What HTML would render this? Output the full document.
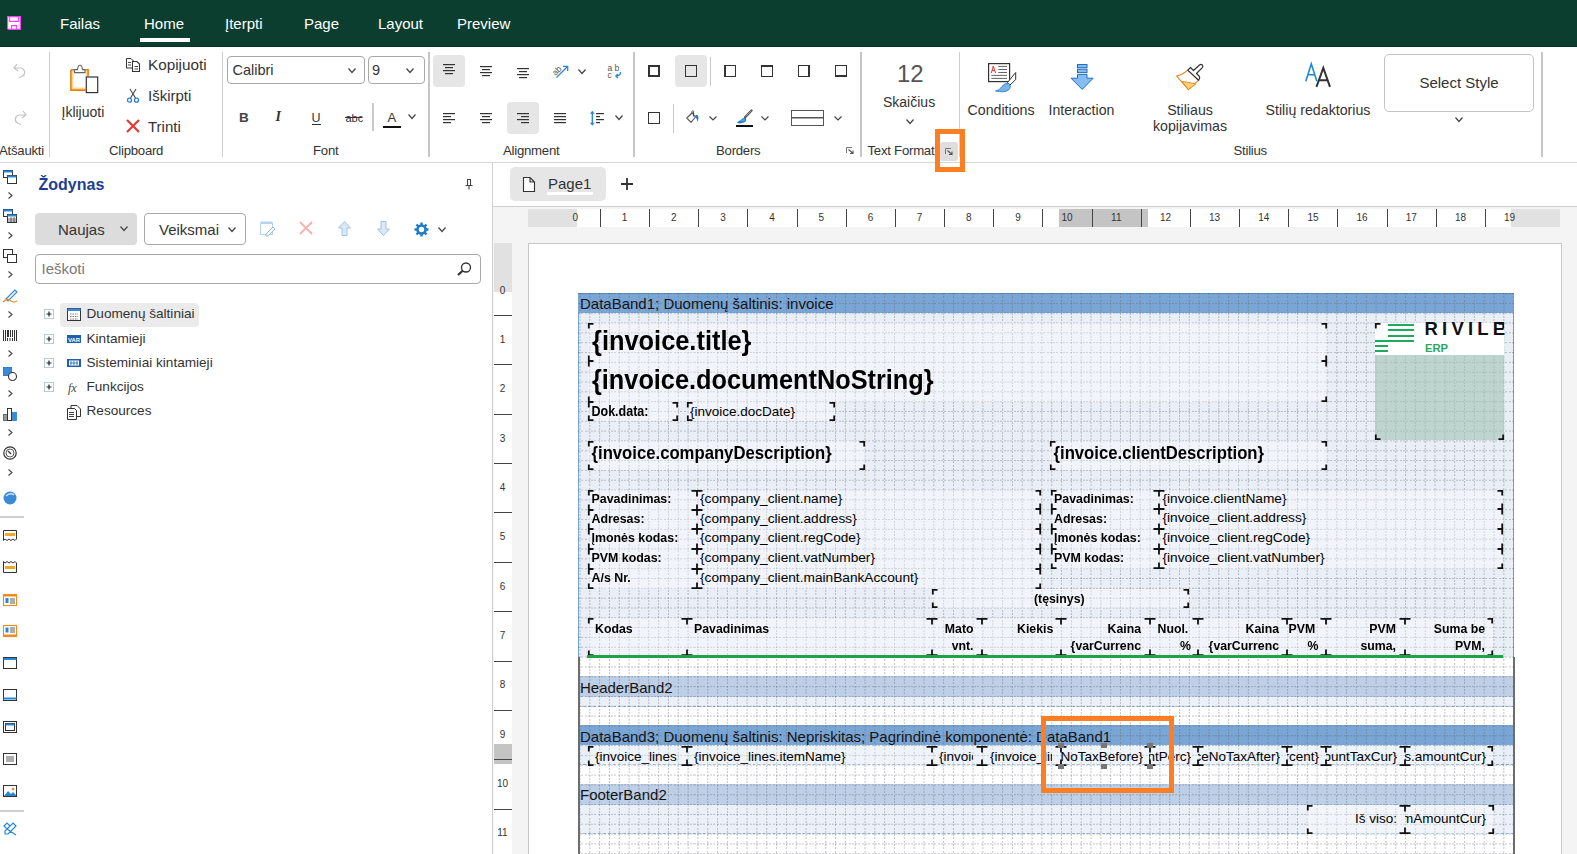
<!DOCTYPE html>
<html><head><meta charset="utf-8"><title>Designer</title>
<style>
html,body{margin:0;padding:0;}
body{width:1577px;height:854px;overflow:hidden;position:relative;background:#fff;font-family:"Liberation Sans",sans-serif;color:#333;}
.a{position:absolute;}
.t{position:absolute;white-space:nowrap;line-height:1;}
svg{overflow:visible}
</style></head><body>

<div class="a" style="left:0px;top:0px;width:1577px;height:47px;background:#0c3e2f;border-bottom:1px solid #06301f;box-sizing:border-box"></div>
<svg class="a" style="left:7px;top:16px" width="14" height="14" viewBox="0 0 14 14"><path d="M0.6 0.6 H13.4 V13.4 H1.6 L0.6 12.4 Z" fill="#fff" stroke="#ff3dff" stroke-width="1.2"/><path d="M2.6 0.6 V5.4 H11.4 V0.6" fill="none" stroke="#ff3dff" stroke-width="1.1"/><path d="M4.6 13.4 V9.6 H9.4 V13.4" fill="none" stroke="#ff3dff" stroke-width="1.1"/></svg>
<div class="t" style="left:60.00px;top:16.49px;font-size:15px;color:#fff;">Failas</div>
<div class="t" style="left:144.00px;top:16.49px;font-size:15px;color:#fff;">Home</div>
<div class="t" style="left:225.00px;top:16.49px;font-size:15px;color:#fff;">Įterpti</div>
<div class="t" style="left:304.00px;top:16.49px;font-size:15px;color:#fff;">Page</div>
<div class="t" style="left:378.00px;top:16.49px;font-size:15px;color:#fff;">Layout</div>
<div class="t" style="left:457.00px;top:16.49px;font-size:15px;color:#fff;">Preview</div>
<div class="a" style="left:140px;top:38px;width:50px;height:4px;background:#fff"></div>
<div class="a" style="left:0px;top:162px;width:1577px;height:1px;background:#d4d4d4"></div>
<div class="a" style="left:49px;top:52px;width:1px;height:105px;background:#cfcfcf"></div>
<div class="a" style="left:222px;top:52px;width:1px;height:105px;background:#cfcfcf"></div>
<div class="a" style="left:428px;top:52px;width:2px;height:105px;background:#c6c6c6"></div>
<div class="a" style="left:633px;top:52px;width:2px;height:105px;background:#c6c6c6"></div>
<div class="a" style="left:860px;top:52px;width:2px;height:105px;background:#c6c6c6"></div>
<div class="a" style="left:959px;top:52px;width:1px;height:105px;background:#cfcfcf"></div>
<div class="a" style="left:1541px;top:52px;width:2px;height:105px;background:#c6c6c6"></div>
<div class="t" style="left:-1.00px;top:144.02px;font-size:13.2px;letter-spacing:-0.25px;">Atšaukti</div>
<div class="t" style="left:109.00px;top:144.02px;font-size:13.2px;letter-spacing:-0.25px;">Clipboard</div>
<div class="t" style="left:313.00px;top:144.02px;font-size:13.2px;letter-spacing:-0.25px;">Font</div>
<div class="t" style="left:503.00px;top:144.02px;font-size:13.2px;letter-spacing:-0.25px;">Alignment</div>
<div class="t" style="left:716.00px;top:144.02px;font-size:13.2px;letter-spacing:-0.25px;">Borders</div>
<div class="t" style="left:867.50px;top:144.02px;font-size:13.2px;letter-spacing:-0.25px;">Text Format</div>
<div class="t" style="left:1233.50px;top:144.02px;font-size:13.2px;letter-spacing:-0.25px;">Stilius</div>
<svg class="a" style="left:13px;top:62px" width="14" height="16" viewBox="0 0 14 16"><path d="M4 2 L1 6 L5 9 M1.5 6 H8 A4.5 4.5 0 0 1 9 14.5 L6 15.5" fill="none" stroke="#c4c4c4" stroke-width="1.2"/></svg>
<svg class="a" style="left:13px;top:109px" width="14" height="16" viewBox="0 0 14 16"><path d="M10 2 L13 6 L9 9 M12.5 6 H6 A4.5 4.5 0 0 0 5 14.5 L8 15.5" fill="none" stroke="#c4c4c4" stroke-width="1.2"/></svg>
<svg class="a" style="left:70px;top:64px" width="29" height="30" viewBox="0 0 29 30"><path d="M1 5.8 H18 V12.5 M1 5.8 V26 H15.5" fill="none" stroke="#e8801a" stroke-width="1.8"/><path d="M2.6 7.4 H16.4 V12.5 M2.6 7.4 V24.4 H15.5" fill="none" stroke="#ffd98a" stroke-width="1.6"/><path d="M4.5 8.6 V5.6 H7.5 Q8 1.2 10 1.2 Q12 1.2 12.5 5.6 H15 V8.6 Z" fill="#fff" stroke="#666" stroke-width="1.1"/><rect x="16.3" y="13" width="11.4" height="15.6" fill="#fff" stroke="#333" stroke-width="1.2"/></svg>
<div class="t" style="left:61.50px;top:105.34px;font-size:14px;">Įklijuoti</div>
<svg class="a" style="left:126px;top:58px" width="14" height="14" viewBox="0 0 14 14"><path d="M0.5 0.5 H5 L7.5 3 V10 H0.5 Z" fill="#fff" stroke="#333" stroke-width="1"/><path d="M6.5 3.5 H11 L13.5 6 V13.5 H6.5 Z" fill="#fff" stroke="#333" stroke-width="1.1"/><rect x="8.5" y="8" width="3.5" height="1" fill="#444"/><rect x="8.5" y="10.5" width="3.5" height="1" fill="#444"/><rect x="2" y="4" width="3" height="1" fill="#444"/><rect x="2" y="6.5" width="3" height="1" fill="#444"/></svg>
<div class="t" style="left:148.00px;top:56.54px;font-size:15.3px;">Kopijuoti</div>
<svg class="a" style="left:126px;top:89px" width="14" height="14" viewBox="0 0 14 14"><path d="M4 0 L9.5 9 M10 0 L4.5 9" stroke="#444" stroke-width="1.1" fill="none"/><circle cx="3.5" cy="11.2" r="2" fill="none" stroke="#2a7fd0" stroke-width="1.3"/><circle cx="10.5" cy="11.2" r="2" fill="none" stroke="#2a7fd0" stroke-width="1.3"/></svg>
<div class="t" style="left:148.00px;top:88.30px;font-size:15px;">Iškirpti</div>
<svg class="a" style="left:126px;top:119px" width="14" height="14" viewBox="0 0 14 14"><path d="M1 1 L13 13 M13 1 L1 13" stroke="#e53935" stroke-width="2.2"/></svg>
<div class="t" style="left:148.00px;top:119.10px;font-size:15px;">Trinti</div>
<div class="a" style="left:227px;top:56px;width:138px;height:28px;border:1px solid #a8a8a8;border-radius:4px;box-sizing:border-box;background:#fff"></div>
<div class="t" style="left:232.50px;top:63.32px;font-size:14.5px;">Calibri</div>
<div class="a" style="left:368px;top:56px;width:57px;height:28px;border:1px solid #a8a8a8;border-radius:4px;box-sizing:border-box;background:#fff"></div>
<div class="t" style="left:372.00px;top:63.32px;font-size:14.5px;">9</div>
<svg class="a" style="left:348px;top:67.5px" width="8" height="5" viewBox="0 0 8 5"><path d="M0.5 0.5 L4.0 4.5 L7.5 0.5" fill="none" stroke="#444" stroke-width="1.2"/></svg>
<svg class="a" style="left:406px;top:67.5px" width="8" height="5" viewBox="0 0 8 5"><path d="M0.5 0.5 L4.0 4.5 L7.5 0.5" fill="none" stroke="#444" stroke-width="1.2"/></svg>
<div class="t" style="left:239.00px;top:110.87px;font-size:13.5px;font-weight:bold;color:#444;">B</div>
<div class="t" style="left:275.50px;top:110.44px;font-size:14px;font-weight:bold;color:#333;font-style:italic;font-family:'Liberation Serif',serif;">I</div>
<div class="t" style="left:311.50px;top:111.71px;font-size:12.5px;color:#333;">U</div>
<div class="a" style="left:312px;top:124px;width:9px;height:1px;background:#333"></div>
<div class="t" style="left:345.50px;top:112.68px;font-size:11px;color:#333;">abc</div>
<div class="a" style="left:345px;top:117px;width:17px;height:1px;background:#333"></div>
<div class="a" style="left:372px;top:103px;width:2px;height:28px;background:#cacaca"></div>
<div class="t" style="left:387.50px;top:111.29px;font-size:13px;color:#333;">A</div>
<div class="a" style="left:383px;top:126px;width:18px;height:2px;background:#111"></div>
<svg class="a" style="left:408px;top:113.5px" width="8" height="5" viewBox="0 0 8 5"><path d="M0.5 0.5 L4.0 4.5 L7.5 0.5" fill="none" stroke="#444" stroke-width="1.2"/></svg>
<div class="a" style="left:433px;top:55px;width:32px;height:32px;background:#e6e6e6;border-radius:4px"></div>
<div class="a" style="left:507px;top:102px;width:32px;height:32px;background:#e6e6e6;border-radius:4px"></div>
<svg class="a" style="left:443px;top:64px" width="12" height="14" viewBox="0 0 12 14"><rect x="0.0" y="0" width="12" height="1.2" fill="#333"/><rect x="2.0" y="3" width="8" height="1.2" fill="#333"/><rect x="0.0" y="6" width="12" height="1.2" fill="#333"/><rect x="2.0" y="9" width="8" height="1.2" fill="#333"/></svg>
<svg class="a" style="left:480px;top:66px" width="12" height="14" viewBox="0 0 12 14"><rect x="0.0" y="0" width="12" height="1.2" fill="#333"/><rect x="2.0" y="3" width="8" height="1.2" fill="#333"/><rect x="0.0" y="6" width="12" height="1.2" fill="#333"/><rect x="2.0" y="9" width="8" height="1.2" fill="#333"/></svg>
<svg class="a" style="left:517px;top:68px" width="12" height="14" viewBox="0 0 12 14"><rect x="0.0" y="0" width="12" height="1.2" fill="#333"/><rect x="2.0" y="3" width="8" height="1.2" fill="#333"/><rect x="0.0" y="6" width="12" height="1.2" fill="#333"/><rect x="2.0" y="9" width="8" height="1.2" fill="#333"/></svg>
<svg class="a" style="left:552px;top:61px" width="17" height="18" viewBox="0 0 17 18"><text x="0" y="0" font-size="8.5" fill="#555" transform="translate(3.5 15) rotate(-45)" font-family="Liberation Sans">ab</text><path d="M4.5 16.5 L15.5 5.5 M11 5.3 H15.7 V10" fill="none" stroke="#2a88d8" stroke-width="1.3"/></svg>
<svg class="a" style="left:578px;top:69px" width="8" height="5" viewBox="0 0 8 5"><path d="M0.5 0.5 L4.0 4.5 L7.5 0.5" fill="none" stroke="#444" stroke-width="1.2"/></svg>
<svg class="a" style="left:607px;top:63px" width="16" height="16" viewBox="0 0 16 16"><text x="0.5" y="7.5" font-size="8.5" fill="#555" font-family="Liberation Sans">a</text><text x="7.5" y="7.5" font-size="8.5" fill="#555" font-family="Liberation Sans">b</text><text x="0.5" y="14.5" font-size="8.5" fill="#555" font-family="Liberation Sans">c</text><path d="M13.5 9 Q13.5 13 9 13 M11 11 L8.8 13 L11 15" fill="none" stroke="#2a88d8" stroke-width="1.3"/></svg>
<svg class="a" style="left:443px;top:113px" width="12" height="14" viewBox="0 0 12 14"><rect x="0" y="0" width="12" height="1.2" fill="#333"/><rect x="0" y="3" width="8" height="1.2" fill="#333"/><rect x="0" y="6" width="12" height="1.2" fill="#333"/><rect x="0" y="9" width="8" height="1.2" fill="#333"/></svg>
<svg class="a" style="left:480px;top:113px" width="12" height="14" viewBox="0 0 12 14"><rect x="0.0" y="0" width="12" height="1.2" fill="#333"/><rect x="2.0" y="3" width="8" height="1.2" fill="#333"/><rect x="0.0" y="6" width="12" height="1.2" fill="#333"/><rect x="2.0" y="9" width="8" height="1.2" fill="#333"/></svg>
<svg class="a" style="left:517px;top:113px" width="12" height="14" viewBox="0 0 12 14"><rect x="0" y="0" width="12" height="1.2" fill="#333"/><rect x="4" y="3" width="8" height="1.2" fill="#333"/><rect x="0" y="6" width="12" height="1.2" fill="#333"/><rect x="4" y="9" width="8" height="1.2" fill="#333"/></svg>
<svg class="a" style="left:554px;top:113px" width="12" height="14" viewBox="0 0 12 14"><rect x="0" y="0" width="12" height="1.2" fill="#333"/><rect x="0" y="3" width="12" height="1.2" fill="#333"/><rect x="0" y="6" width="12" height="1.2" fill="#333"/><rect x="0" y="9" width="12" height="1.2" fill="#333"/></svg>
<svg class="a" style="left:589px;top:110px" width="16" height="17" viewBox="0 0 16 17"><path d="M3.3 3 V13.5" stroke="#2a88d8" stroke-width="1.4"/><path d="M3.3 0.8 L0.9 3.8 H5.7 Z M3.3 15.8 L0.9 12.8 H5.7 Z" fill="#2a88d8"/><rect x="7" y="3" width="8" height="1.2" fill="#333"/><rect x="7" y="6" width="4" height="1.2" fill="#333"/><rect x="7" y="9" width="8" height="1.2" fill="#333"/><rect x="7" y="12" width="4" height="1.2" fill="#333"/></svg>
<svg class="a" style="left:615px;top:115px" width="8" height="5" viewBox="0 0 8 5"><path d="M0.5 0.5 L4.0 4.5 L7.5 0.5" fill="none" stroke="#444" stroke-width="1.2"/></svg>
<div class="a" style="left:675px;top:55px;width:32px;height:32px;background:#e6e6e6;border-radius:4px"></div>
<div class="a" style="left:710px;top:57px;width:1px;height:29px;background:#c8c8c8"></div>
<div class="a" style="left:673px;top:104px;width:1px;height:29px;background:#c8c8c8"></div>
<svg class="a" style="left:648px;top:65px" width="12" height="12" viewBox="0 0 12 12"><rect x="0.5" y="0.5" width="11" height="11" fill="none" stroke="#333" stroke-width="1"/><rect x="0" y="0" width="12" height="2" fill="#333"/><rect x="0" y="0" width="2" height="12" fill="#333"/><rect x="10" y="0" width="2" height="12" fill="#333"/><rect x="0" y="10" width="12" height="2" fill="#333"/></svg>
<svg class="a" style="left:685px;top:65px" width="12" height="12" viewBox="0 0 12 12"><rect x="0.5" y="0.5" width="11" height="11" fill="none" stroke="#333" stroke-width="1"/></svg>
<svg class="a" style="left:724px;top:65px" width="12" height="12" viewBox="0 0 12 12"><rect x="0.5" y="0.5" width="11" height="11" fill="none" stroke="#333" stroke-width="1"/><rect x="0" y="0" width="2" height="12" fill="#333"/></svg>
<svg class="a" style="left:761px;top:65px" width="12" height="12" viewBox="0 0 12 12"><rect x="0.5" y="0.5" width="11" height="11" fill="none" stroke="#333" stroke-width="1"/><rect x="0" y="0" width="12" height="2" fill="#333"/></svg>
<svg class="a" style="left:798px;top:65px" width="12" height="12" viewBox="0 0 12 12"><rect x="0.5" y="0.5" width="11" height="11" fill="none" stroke="#333" stroke-width="1"/><rect x="10" y="0" width="2" height="12" fill="#333"/></svg>
<svg class="a" style="left:835px;top:65px" width="12" height="12" viewBox="0 0 12 12"><rect x="0.5" y="0.5" width="11" height="11" fill="none" stroke="#333" stroke-width="1"/><rect x="0" y="10" width="12" height="2" fill="#333"/></svg>
<svg class="a" style="left:648px;top:112px" width="12" height="12" viewBox="0 0 12 12"><rect x="0.5" y="0.5" width="11" height="11" fill="none" stroke="#333" stroke-width="1"/></svg>
<svg class="a" style="left:686px;top:109px" width="14" height="15" viewBox="0 0 14 15"><path d="M0.8 9 L6 4 L9.5 8 L5 13.3 Z" fill="#fff" stroke="#555" stroke-width="1.1" stroke-linejoin="round"/><path d="M6 4.5 V2.5 Q6.8 0.8 7.6 2.5 V7.5" fill="none" stroke="#444" stroke-width="1"/><path d="M9.3 6.2 Q12.8 4.8 12.4 9.5 Q12.2 11.2 11.6 12.8 Q10.8 9.2 9.3 8 Z" fill="#1f7ac8"/></svg>
<svg class="a" style="left:709px;top:116px" width="8" height="4.5" viewBox="0 0 8 4.5"><path d="M0.5 0.5 L4.0 4.0 L7.5 0.5" fill="none" stroke="#444" stroke-width="1.2"/></svg>
<svg class="a" style="left:736px;top:109px" width="17" height="15" viewBox="0 0 17 15"><path d="M15.5 1.5 L9 8.3" stroke="#555" stroke-width="2.4" stroke-linecap="round"/><path d="M15.3 1.7 L9.5 7.8" stroke="#bbb" stroke-width="0.7"/><path d="M1 14 Q2 11.8 4.5 11.2 Q6.5 8.2 9.8 8.8 Q11.2 12 8 13.6 Q4.5 15 1 14 Z" fill="#2a7fd0"/><path d="M5.5 12 Q7 10.5 8.5 11" stroke="#8fc0ef" stroke-width="1" fill="none"/></svg>
<div class="a" style="left:736px;top:125px;width:17px;height:2px;background:#111"></div>
<svg class="a" style="left:761px;top:116px" width="8" height="4.5" viewBox="0 0 8 4.5"><path d="M0.5 0.5 L4.0 4.0 L7.5 0.5" fill="none" stroke="#444" stroke-width="1.2"/></svg>
<svg class="a" style="left:791px;top:110px" width="33" height="16" viewBox="0 0 33 16"><rect x="0.5" y="0.5" width="32" height="15" fill="none" stroke="#555" stroke-width="1"/><rect x="0" y="7" width="33" height="1.5" fill="#555"/></svg>
<svg class="a" style="left:834px;top:116px" width="8" height="4.5" viewBox="0 0 8 4.5"><path d="M0.5 0.5 L4.0 4.0 L7.5 0.5" fill="none" stroke="#444" stroke-width="1.2"/></svg>
<svg class="a" style="left:846px;top:147px" width="8" height="7" viewBox="0 0 8 7"><path d="M0.5 6 V0.5 H6" fill="none" stroke="#777" stroke-width="1"/><path d="M2.5 2.5 L7 6.5 M7 3.5 V6.5 H4" fill="none" stroke="#555" stroke-width="1.1"/></svg>
<div class="t" style="left:897.00px;top:61.67px;font-size:24px;color:#555;font-weight:300;">12</div>
<div class="t" style="left:883.00px;top:94.74px;font-size:14px;">Skaičius</div>
<svg class="a" style="left:906px;top:118.5px" width="8" height="5" viewBox="0 0 8 5"><path d="M0.5 0.5 L4.0 4.5 L7.5 0.5" fill="none" stroke="#444" stroke-width="1.2"/></svg>
<div class="a" style="left:940px;top:142px;width:18px;height:19px;background:#dedede;border-radius:3px"></div>
<svg class="a" style="left:945px;top:148px" width="8" height="7" viewBox="0 0 8 7"><path d="M0.5 6 V0.5 H6" fill="none" stroke="#777" stroke-width="1"/><path d="M2.5 2.5 L7 6.5 M7 3.5 V6.5 H4" fill="none" stroke="#555" stroke-width="1.1"/></svg>
<svg class="a" style="left:988px;top:63px" width="30" height="30" viewBox="0 0 30 30"><rect x="0.6" y="0.6" width="21" height="18" fill="#fff" stroke="#333" stroke-width="1.2"/><path d="M3.3 10 L5.3 3 L7.5 10 M4 7.6 H6.8" fill="none" stroke="#e53935" stroke-width="1"/><path d="M10.3 3.4 H19 M10.3 6.5 H19 M10.3 9.5 H19 M3.3 12.4 H19 M3.3 15.4 H19" stroke="#555" stroke-width="0.9"/><path d="M27.7 9.5 V16.5 L22 22 L19.5 19.5 Z" fill="#fff" stroke="#333" stroke-width="1"/><path d="M7.5 28 Q11.5 27.5 13.5 24 Q16.5 19.5 21 20.5 Q24 23.5 20.5 27 Q16 30 7.5 28 Z" fill="#7ab4e8" stroke="#2a7fd0" stroke-width="0.9"/></svg>
<div class="t" style="left:967.50px;top:102.67px;font-size:14.2px;">Conditions</div>
<svg class="a" style="left:1070px;top:64px" width="24" height="26" viewBox="0 0 24 26"><rect x="7.5" y="0.5" width="9.5" height="3.2" fill="#86bdee" stroke="#1f6fc0" stroke-width="1"/><rect x="7.5" y="5.2" width="9.5" height="3.4" fill="#86bdee" stroke="#1f6fc0" stroke-width="1"/><path d="M7.5 10.4 H17 V14.2 H23.2 L12.2 25.4 L1 14.2 H7.5 Z" fill="#86bdee" stroke="#1f6fc0" stroke-width="1"/></svg>
<div class="t" style="left:1048.50px;top:103.06px;font-size:14.1px;">Interaction</div>
<svg class="a" style="left:1176px;top:64px" width="28" height="27" viewBox="0 0 28 27"><path d="M0.7 12 Q6 11 11.8 6.1 L22.6 16.3 L12.3 25.5 Z" fill="#fff" stroke="#e8801a" stroke-width="1.1"/><path d="M6 17.5 Q12 18 20 20 L12.3 25.5 Z" fill="#ffd27a" stroke="#e8801a" stroke-width="0.9"/><path d="M11.8 6.1 L14.5 3.5 L17.5 6.5 L23.5 1 Q25 -0.2 26.3 1 Q27.5 2.3 26.3 3.6 L20.5 9.5 L23.5 12.5 Q24.2 13.8 22.6 16.3 Z" fill="#fff" stroke="#333" stroke-width="1.2" stroke-linejoin="round"/></svg>
<div class="t" style="left:890.00px;width:600px;text-align:center;top:102.97px;font-size:14.2px;">Stiliaus</div>
<div class="t" style="left:890.00px;width:600px;text-align:center;top:118.57px;font-size:14.2px;">kopijavimas</div>
<svg class="a" style="left:1305px;top:63px" width="27" height="25" viewBox="0 0 27 25"><path d="M0.8 18.3 L6.3 0.8 L11.8 18.3 M3 11.8 H9.6" fill="none" stroke="#1f88d8" stroke-width="1.6"/><path d="M11.5 23.8 L18.3 5 L25 23.8 M14 17.3 H22.6" fill="none" stroke="#333" stroke-width="2"/></svg>
<div class="t" style="left:1018.00px;width:600px;text-align:center;top:102.97px;font-size:14.2px;">Stilių redaktorius</div>
<div class="a" style="left:1384px;top:54px;width:150px;height:58px;border:1px solid #c4c4c4;border-radius:5px;box-sizing:border-box;background:#fff"></div>
<div class="t" style="left:1159.00px;width:600px;text-align:center;top:75.00px;font-size:15px;">Select Style</div>
<svg class="a" style="left:1455px;top:116.5px" width="8" height="5" viewBox="0 0 8 5"><path d="M0.5 0.5 L4.0 4.5 L7.5 0.5" fill="none" stroke="#444" stroke-width="1.2"/></svg>
<div class="a" style="left:935px;top:129px;width:30px;height:43px;border:5px solid #fd7e23;box-sizing:border-box"></div>
<svg class="a" style="left:3px;top:170px" width="14" height="14" viewBox="0 0 14 14"><rect x="0.5" y="0.5" width="9" height="7" fill="#fff" stroke="#333"/><rect x="0.5" y="0.5" width="9" height="2" fill="#2a88d8"/><rect x="4.5" y="5.5" width="9" height="8" fill="#fff" stroke="#333"/><rect x="4.5" y="5.5" width="9" height="2" fill="#2a88d8"/></svg>
<svg class="a" style="left:3px;top:209px" width="14" height="14" viewBox="0 0 14 14"><rect x="0.5" y="0.5" width="9" height="7" fill="#fff" stroke="#333"/><rect x="0.5" y="0.5" width="9" height="2" fill="#2a88d8"/><rect x="4.5" y="5.5" width="9" height="8" fill="#fff" stroke="#333"/><rect x="4.5" y="5.5" width="9" height="2" fill="#2a88d8"/><path d="M5 10 H14 M5 12 H14 M8 8 V14 M11 8 V14" stroke="#333" stroke-width="0.7"/></svg>
<svg class="a" style="left:3px;top:249px" width="14" height="14" viewBox="0 0 14 14"><rect x="0.5" y="0.5" width="9" height="8" fill="#fff" stroke="#333"/><rect x="4.5" y="5.5" width="9" height="8" fill="#fff" stroke="#333"/></svg>
<svg class="a" style="left:3px;top:288px" width="14" height="14" viewBox="0 0 14 14"><path d="M3 11 L12 2 L14 4 L5 13 Z" fill="#fff" stroke="#2a88d8" stroke-width="1.1"/><path d="M0 14 Q4 10 8 13 Q11 15 14 13" fill="none" stroke="#f08a1c" stroke-width="1.2"/></svg>
<svg class="a" style="left:3px;top:329px" width="14" height="14" viewBox="0 0 14 14"><rect x="0" y="1" width="1" height="11" fill="#333"/><rect x="2" y="1" width="1" height="11" fill="#333"/><rect x="4" y="1" width="2" height="7" fill="#333"/><rect x="7" y="1" width="1" height="7" fill="#333"/><rect x="9" y="1" width="1" height="7" fill="#333"/><rect x="11" y="1" width="1" height="11" fill="#333"/><rect x="13" y="1" width="1" height="11" fill="#333"/><rect x="4" y="9" width="1" height="3" fill="#333"/><rect x="6.5" y="9" width="1" height="3" fill="#333"/><rect x="9" y="9" width="1" height="3" fill="#333"/></svg>
<svg class="a" style="left:3px;top:367px" width="14" height="14" viewBox="0 0 14 14"><rect x="0.5" y="0.5" width="8" height="8" fill="#3b8ad8" stroke="#2a7fd0"/><circle cx="9.5" cy="9.5" r="4" fill="#fff" stroke="#333" stroke-width="1.1"/></svg>
<svg class="a" style="left:3px;top:407px" width="14" height="14" viewBox="0 0 14 14"><rect x="0.5" y="7.5" width="4" height="6" fill="#999" stroke="#555" stroke-width="0.8"/><rect x="4.5" y="1.5" width="4" height="12" fill="#fff" stroke="#333" stroke-width="1"/><rect x="9.5" y="5.5" width="4" height="8" fill="#3b8ad8" stroke="#2a7fd0" stroke-width="0.8"/></svg>
<svg class="a" style="left:3px;top:446px" width="14" height="14" viewBox="0 0 14 14"><circle cx="7" cy="7" r="6.2" fill="#fff" stroke="#333" stroke-width="1.2"/><circle cx="7" cy="7" r="4" fill="none" stroke="#333" stroke-width="0.8"/><path d="M5 5 L8 8" stroke="#333" stroke-width="1.2"/></svg>
<svg class="a" style="left:3px;top:491px" width="14" height="14" viewBox="0 0 14 14"><circle cx="7" cy="7" r="6.5" fill="#3b8ad8"/><path d="M3 5 Q7 1 11 4" stroke="#cfe3f7" stroke-width="1.5" fill="none"/></svg>
<svg class="a" style="left:8px;top:192px" width="5" height="7" viewBox="0 0 5 7"><path d="M0.5 0.5 L4 3.5 L0.5 6.5" fill="none" stroke="#444" stroke-width="1.1"/></svg>
<svg class="a" style="left:8px;top:232px" width="5" height="7" viewBox="0 0 5 7"><path d="M0.5 0.5 L4 3.5 L0.5 6.5" fill="none" stroke="#444" stroke-width="1.1"/></svg>
<svg class="a" style="left:8px;top:271px" width="5" height="7" viewBox="0 0 5 7"><path d="M0.5 0.5 L4 3.5 L0.5 6.5" fill="none" stroke="#444" stroke-width="1.1"/></svg>
<svg class="a" style="left:8px;top:311px" width="5" height="7" viewBox="0 0 5 7"><path d="M0.5 0.5 L4 3.5 L0.5 6.5" fill="none" stroke="#444" stroke-width="1.1"/></svg>
<svg class="a" style="left:8px;top:350px" width="5" height="7" viewBox="0 0 5 7"><path d="M0.5 0.5 L4 3.5 L0.5 6.5" fill="none" stroke="#444" stroke-width="1.1"/></svg>
<svg class="a" style="left:8px;top:390px" width="5" height="7" viewBox="0 0 5 7"><path d="M0.5 0.5 L4 3.5 L0.5 6.5" fill="none" stroke="#444" stroke-width="1.1"/></svg>
<svg class="a" style="left:8px;top:429px" width="5" height="7" viewBox="0 0 5 7"><path d="M0.5 0.5 L4 3.5 L0.5 6.5" fill="none" stroke="#444" stroke-width="1.1"/></svg>
<svg class="a" style="left:8px;top:469px" width="5" height="7" viewBox="0 0 5 7"><path d="M0.5 0.5 L4 3.5 L0.5 6.5" fill="none" stroke="#444" stroke-width="1.1"/></svg>
<div class="a" style="left:0px;top:516px;width:24px;height:2px;background:#cfcfcf"></div>
<div class="a" style="left:0px;top:810px;width:24px;height:2px;background:#cfcfcf"></div>
<svg class="a" style="left:3px;top:528px" width="14" height="14" viewBox="0 0 14 14"><path d="M0.5 2.5 H13.5 V11 L12 12.5 L10 11 L8 12.5 L6 11 L4 12.5 L2 11 L0.5 12.5 Z" fill="#fff" stroke="#333" stroke-width="1"/><rect x="2" y="5" width="10" height="3" fill="#f5a623"/></svg>
<svg class="a" style="left:3px;top:560px" width="14" height="14" viewBox="0 0 14 14"><path d="M0.5 1.5 L2 3 L4 1.5 L6 3 L8 1.5 L10 3 L12 1.5 L13.5 3 V12.5 H0.5 Z" fill="#fff" stroke="#333" stroke-width="1"/><rect x="2" y="6" width="10" height="3" fill="#f5a623"/></svg>
<svg class="a" style="left:3px;top:593px" width="14" height="14" viewBox="0 0 14 14"><rect x="0.5" y="1.5" width="13" height="11" fill="#fff" stroke="#f08a1c" stroke-width="1.1"/><rect x="0.5" y="1.5" width="13" height="2" fill="#f08a1c"/><rect x="2.5" y="5" width="3" height="5" fill="#2a88d8"/><path d="M7 6 H12 M7 8 H12 M7 10 H12" stroke="#333" stroke-width="0.8"/></svg>
<svg class="a" style="left:3px;top:624px" width="14" height="14" viewBox="0 0 14 14"><rect x="0.5" y="1.5" width="13" height="11" fill="#fff" stroke="#f08a1c" stroke-width="1.1"/><rect x="0.5" y="10.5" width="13" height="2" fill="#f08a1c"/><rect x="2.5" y="3.5" width="3" height="5" fill="#2a88d8"/><path d="M7 4 H12 M7 6 H12 M7 8 H12" stroke="#333" stroke-width="0.8"/></svg>
<svg class="a" style="left:3px;top:656px" width="14" height="14" viewBox="0 0 14 14"><rect x="0.5" y="1.5" width="13" height="11" fill="#fff" stroke="#333" stroke-width="1"/><rect x="0.5" y="2" width="13" height="2" fill="#2a88d8"/></svg>
<svg class="a" style="left:3px;top:688px" width="14" height="14" viewBox="0 0 14 14"><rect x="0.5" y="1.5" width="13" height="11" fill="#fff" stroke="#333" stroke-width="1"/><rect x="0.5" y="9.5" width="13" height="2" fill="#2a88d8"/></svg>
<svg class="a" style="left:3px;top:720px" width="14" height="14" viewBox="0 0 14 14"><rect x="0.5" y="1.5" width="13" height="11" fill="#fff" stroke="#333" stroke-width="1"/><rect x="2.5" y="3.5" width="9" height="7" fill="#fff" stroke="#333" stroke-width="1"/><rect x="2.5" y="3.5" width="9" height="2" fill="#2a88d8"/></svg>
<svg class="a" style="left:3px;top:752px" width="14" height="14" viewBox="0 0 14 14"><rect x="0.5" y="1.5" width="13" height="11" fill="#fff" stroke="#333" stroke-width="1"/><path d="M3 5 H11 M3 7 H11 M3 9 H11" stroke="#333" stroke-width="0.8"/></svg>
<svg class="a" style="left:3px;top:784px" width="14" height="14" viewBox="0 0 14 14"><rect x="0.5" y="1.5" width="13" height="11" fill="#fff" stroke="#333" stroke-width="1"/><path d="M1 12 L5 7 L8 10 L10 8 L13 11 V12 Z" fill="#2a88d8"/><circle cx="10" cy="5" r="1.3" fill="#f08a1c"/></svg>
<svg class="a" style="left:3px;top:822px" width="14" height="14" viewBox="0 0 14 14"><path d="M1 4 L4 1 L7 4 L4 7 Z M4 7 L13 13 M10 1 L13 4 L5 12 L2 12 L2 9 Z" fill="none" stroke="#2a88d8" stroke-width="1.2"/></svg>
<div class="a" style="left:492px;top:163px;width:1px;height:691px;background:#d0d0d0"></div>
<div class="t" style="left:38.50px;top:177.25px;font-size:16px;font-weight:bold;color:#1c3f8e;">Žodynas</div>
<svg class="a" style="left:465px;top:179px" width="8" height="11" viewBox="0 0 8 11"><path d="M2 0.5 H6 M2.5 0.5 V6 M5.5 0.5 V6 M0.5 6.5 H7.5 M4 6.5 V10.5" fill="none" stroke="#444" stroke-width="1.1"/></svg>
<div class="a" style="left:35px;top:213px;width:102px;height:32px;background:#dcdcdc;border-radius:4px"></div>
<div class="t" style="left:58.00px;top:221.89px;font-size:15px;">Naujas</div>
<svg class="a" style="left:120px;top:226px" width="8" height="5" viewBox="0 0 8 5"><path d="M0.5 0.5 L4.0 4.5 L7.5 0.5" fill="none" stroke="#444" stroke-width="1.2"/></svg>
<div class="a" style="left:144px;top:213px;width:102px;height:32px;border:1px solid #a8a8a8;border-radius:4px;box-sizing:border-box;background:#fff"></div>
<div class="t" style="left:159.00px;top:222.19px;font-size:15px;">Veiksmai</div>
<svg class="a" style="left:228px;top:227px" width="8" height="5" viewBox="0 0 8 5"><path d="M0.5 0.5 L4.0 4.5 L7.5 0.5" fill="none" stroke="#444" stroke-width="1.2"/></svg>
<svg class="a" style="left:260px;top:221px" width="15" height="15" viewBox="0 0 15 15"><rect x="0.5" y="2.5" width="12" height="11" fill="none" stroke="#b7d2ee" stroke-width="1"/><rect x="0.5" y="0.5" width="12" height="2" fill="#b7d2ee"/><path d="M6 13 L13 6 L15 8 L8 15 L6 15 Z" fill="#fff" stroke="#8fbbe6" stroke-width="1"/></svg>
<svg class="a" style="left:299px;top:221px" width="14" height="14" viewBox="0 0 14 14"><path d="M1 1 L13 13 M13 1 L1 13" stroke="#f4b5b5" stroke-width="2"/></svg>
<svg class="a" style="left:338px;top:221px" width="13" height="15" viewBox="0 0 13 15"><path d="M6.5 0.5 L12.5 7 H9 V14.5 H4 V7 H0.5 Z" fill="#dbe9f7" stroke="#9cc4ea" stroke-width="1"/></svg>
<svg class="a" style="left:377px;top:221px" width="13" height="15" viewBox="0 0 13 15"><path d="M6.5 14.5 L12.5 8 H9 V0.5 H4 V8 H0.5 Z" fill="#dbe9f7" stroke="#9cc4ea" stroke-width="1"/></svg>
<svg class="a" style="left:414px;top:222px" width="15" height="15" viewBox="0 0 15 15"><circle cx="7.5" cy="7.5" r="4" fill="none" stroke="#1f7ac8" stroke-width="2.6"/><path d="M7.5 0.5 V3 M7.5 12 V14.5 M0.5 7.5 H3 M12 7.5 H14.5 M2.5 2.5 L4.3 4.3 M10.7 10.7 L12.5 12.5 M12.5 2.5 L10.7 4.3 M4.3 10.7 L2.5 12.5" stroke="#1f7ac8" stroke-width="2.4"/></svg>
<svg class="a" style="left:438px;top:227px" width="8" height="5" viewBox="0 0 8 5"><path d="M0.5 0.5 L4.0 4.5 L7.5 0.5" fill="none" stroke="#444" stroke-width="1.2"/></svg>
<div class="a" style="left:35px;top:254px;width:446px;height:30px;border:1px solid #a8a8a8;border-radius:4px;box-sizing:border-box;background:#fff"></div>
<div class="t" style="left:41.50px;top:261.10px;font-size:15px;color:#7a7a7a;">Ieškoti</div>
<svg class="a" style="left:457px;top:262px" width="15" height="14" viewBox="0 0 15 14"><circle cx="9" cy="5.5" r="4.5" fill="none" stroke="#333" stroke-width="1.3"/><path d="M6 8.5 L1 13" stroke="#333" stroke-width="2.2"/></svg>
<div class="a" style="left:60px;top:303px;width:139px;height:24px;background:#ebebeb;border-radius:4px"></div>
<svg class="a" style="left:44px;top:309px" width="10" height="10" viewBox="0 0 10 10"><rect x="0.5" y="0.5" width="9" height="9" fill="#fff" stroke="#b9c9d9" stroke-width="1"/><path d="M2.5 5 H7.5 M5 2.5 V7.5" stroke="#222" stroke-width="1.2"/></svg>
<svg class="a" style="left:44px;top:334px" width="10" height="10" viewBox="0 0 10 10"><rect x="0.5" y="0.5" width="9" height="9" fill="#fff" stroke="#b9c9d9" stroke-width="1"/><path d="M2.5 5 H7.5 M5 2.5 V7.5" stroke="#222" stroke-width="1.2"/></svg>
<svg class="a" style="left:44px;top:358px" width="10" height="10" viewBox="0 0 10 10"><rect x="0.5" y="0.5" width="9" height="9" fill="#fff" stroke="#b9c9d9" stroke-width="1"/><path d="M2.5 5 H7.5 M5 2.5 V7.5" stroke="#222" stroke-width="1.2"/></svg>
<svg class="a" style="left:44px;top:382px" width="10" height="10" viewBox="0 0 10 10"><rect x="0.5" y="0.5" width="9" height="9" fill="#fff" stroke="#b9c9d9" stroke-width="1"/><path d="M2.5 5 H7.5 M5 2.5 V7.5" stroke="#222" stroke-width="1.2"/></svg>
<svg class="a" style="left:67px;top:308px" width="14" height="13" viewBox="0 0 14 13"><rect x="0.5" y="0.5" width="13" height="12" fill="#fff" stroke="#333" stroke-width="1"/><rect x="0.5" y="0.5" width="13" height="2.5" fill="#3b8ad8"/><path d="M3 6 H11 M3 8.5 H11 M3 11 H11" stroke="#555" stroke-width="0.8" stroke-dasharray="1.5 1"/></svg>
<svg class="a" style="left:67px;top:335px" width="14" height="8" viewBox="0 0 14 8"><rect x="0" y="0" width="14" height="8" fill="#1f5fb0"/><text x="1" y="6.8" font-size="6" fill="#fff" font-family="Liberation Sans" font-weight="bold" textLength="12" lengthAdjust="spacingAndGlyphs">VAR</text></svg>
<svg class="a" style="left:67px;top:359px" width="14" height="8" viewBox="0 0 14 8"><rect x="0" y="0" width="14" height="8" fill="#1f5fb0"/><rect x="2" y="1.5" width="10" height="5" fill="#fff"/><path d="M4 2 V6 M7 2 V6 M10 2 V6 M3 4 H11" stroke="#1f5fb0" stroke-width="0.8"/></svg>
<div class="t" style="left:68.00px;top:381.84px;font-size:12px;color:#444;font-family:'Liberation Serif',serif;"><i>fx</i></div>
<svg class="a" style="left:67px;top:405px" width="14" height="15" viewBox="0 0 14 15"><path d="M4 3 V0.5 H10 L13.5 4 V11.5 H10" fill="none" stroke="#333" stroke-width="1"/><path d="M0.5 3.5 H7.5 L9.5 5.5 V14.5 H0.5 Z" fill="#fff" stroke="#333" stroke-width="1"/><rect x="2" y="7" width="5" height="1" fill="#444"/><rect x="2" y="9" width="5" height="1" fill="#444"/><rect x="2" y="11" width="5" height="1" fill="#444"/></svg>
<div class="t" style="left:86.50px;top:307.08px;font-size:13.6px;">Duomenų šaltiniai</div>
<div class="t" style="left:86.50px;top:331.88px;font-size:13.6px;">Kintamieji</div>
<div class="t" style="left:86.50px;top:355.78px;font-size:13.6px;">Sisteminiai kintamieji</div>
<div class="t" style="left:86.50px;top:380.48px;font-size:13.6px;">Funkcijos</div>
<div class="t" style="left:86.50px;top:404.48px;font-size:13.6px;">Resources</div>
<div class="a" style="left:493px;top:207px;width:1084px;height:647px;background:#f4f4f4"></div>
<div class="a" style="left:510px;top:167px;width:96px;height:34px;background:#e6e6e6;border-radius:5px"></div>
<svg class="a" style="left:523px;top:177px" width="12" height="15" viewBox="0 0 12 15"><path d="M0.5 0.5 H7 L11.5 5 V14.5 H0.5 Z M7 0.5 V5 H11.5" fill="#fff" stroke="#333" stroke-width="1.1"/></svg>
<div class="t" style="left:548.00px;top:176.29px;font-size:15px;">Page1</div>
<div class="a" style="left:547px;top:192px;width:46px;height:3px;background:#fff"></div>
<svg class="a" style="left:621px;top:178px" width="12" height="12" viewBox="0 0 12 12"><path d="M6 0 V12 M0 6 H12" stroke="#333" stroke-width="1.8"/></svg>
<div class="a" style="left:493px;top:206px;width:1084px;height:1px;background:#cfcfcf"></div>
<div class="a" style="left:528px;top:209px;width:1032px;height:18px;background:#fff"></div>
<div class="a" style="left:528px;top:209px;width:49px;height:18px;background:#e1e1e1"></div>
<div class="a" style="left:1511px;top:209px;width:49px;height:18px;background:#e1e1e1"></div>
<div class="a" style="left:1059px;top:209px;width:89px;height:18px;background:#c4c4c4"></div>
<div class="t" style="left:275.40px;width:600px;text-align:center;top:212.83px;font-size:10px;color:#333;">0</div>
<div class="t" style="left:324.57px;width:600px;text-align:center;top:212.83px;font-size:10px;color:#333;">1</div>
<div class="t" style="left:373.74px;width:600px;text-align:center;top:212.83px;font-size:10px;color:#333;">2</div>
<div class="t" style="left:422.91px;width:600px;text-align:center;top:212.83px;font-size:10px;color:#333;">3</div>
<div class="t" style="left:472.08px;width:600px;text-align:center;top:212.83px;font-size:10px;color:#333;">4</div>
<div class="t" style="left:521.25px;width:600px;text-align:center;top:212.83px;font-size:10px;color:#333;">5</div>
<div class="t" style="left:570.42px;width:600px;text-align:center;top:212.83px;font-size:10px;color:#333;">6</div>
<div class="t" style="left:619.59px;width:600px;text-align:center;top:212.83px;font-size:10px;color:#333;">7</div>
<div class="t" style="left:668.76px;width:600px;text-align:center;top:212.83px;font-size:10px;color:#333;">8</div>
<div class="t" style="left:717.93px;width:600px;text-align:center;top:212.83px;font-size:10px;color:#333;">9</div>
<div class="t" style="left:767.10px;width:600px;text-align:center;top:212.83px;font-size:10px;color:#333;">10</div>
<div class="t" style="left:816.27px;width:600px;text-align:center;top:212.83px;font-size:10px;color:#333;">11</div>
<div class="t" style="left:865.44px;width:600px;text-align:center;top:212.83px;font-size:10px;color:#333;">12</div>
<div class="t" style="left:914.61px;width:600px;text-align:center;top:212.83px;font-size:10px;color:#333;">13</div>
<div class="t" style="left:963.78px;width:600px;text-align:center;top:212.83px;font-size:10px;color:#333;">14</div>
<div class="t" style="left:1012.95px;width:600px;text-align:center;top:212.83px;font-size:10px;color:#333;">15</div>
<div class="t" style="left:1062.12px;width:600px;text-align:center;top:212.83px;font-size:10px;color:#333;">16</div>
<div class="t" style="left:1111.29px;width:600px;text-align:center;top:212.83px;font-size:10px;color:#333;">17</div>
<div class="t" style="left:1160.46px;width:600px;text-align:center;top:212.83px;font-size:10px;color:#333;">18</div>
<div class="t" style="left:1209.63px;width:600px;text-align:center;top:212.83px;font-size:10px;color:#333;">19</div>
<div class="a" style="left:600px;top:209px;width:1.3px;height:18px;background:#444"></div>
<div class="a" style="left:649px;top:209px;width:1.3px;height:18px;background:#444"></div>
<div class="a" style="left:698px;top:209px;width:1.3px;height:18px;background:#444"></div>
<div class="a" style="left:747px;top:209px;width:1.3px;height:18px;background:#444"></div>
<div class="a" style="left:797px;top:209px;width:1.3px;height:18px;background:#444"></div>
<div class="a" style="left:846px;top:209px;width:1.3px;height:18px;background:#444"></div>
<div class="a" style="left:895px;top:209px;width:1.3px;height:18px;background:#444"></div>
<div class="a" style="left:944px;top:209px;width:1.3px;height:18px;background:#444"></div>
<div class="a" style="left:993px;top:209px;width:1.3px;height:18px;background:#444"></div>
<div class="a" style="left:1042px;top:209px;width:1.3px;height:18px;background:#444"></div>
<div class="a" style="left:1092px;top:209px;width:1.3px;height:18px;background:#444"></div>
<div class="a" style="left:1141px;top:209px;width:1.3px;height:18px;background:#444"></div>
<div class="a" style="left:1190px;top:209px;width:1.3px;height:18px;background:#444"></div>
<div class="a" style="left:1239px;top:209px;width:1.3px;height:18px;background:#444"></div>
<div class="a" style="left:1288px;top:209px;width:1.3px;height:18px;background:#444"></div>
<div class="a" style="left:1337px;top:209px;width:1.3px;height:18px;background:#444"></div>
<div class="a" style="left:1387px;top:209px;width:1.3px;height:18px;background:#444"></div>
<div class="a" style="left:1436px;top:209px;width:1.3px;height:18px;background:#444"></div>
<div class="a" style="left:1485px;top:209px;width:1.3px;height:18px;background:#444"></div>
<div class="a" style="left:494px;top:243px;width:18px;height:611px;background:#fff"></div>
<div class="a" style="left:494px;top:243px;width:18px;height:49px;background:#e1e1e1"></div>
<div class="a" style="left:494px;top:744px;width:18px;height:20px;background:#c4c4c4"></div>
<div class="t" style="left:202.50px;width:600px;text-align:center;top:285.53px;font-size:10px;color:#333;">0</div>
<div class="t" style="left:202.50px;width:600px;text-align:center;top:334.89px;font-size:10px;color:#333;">1</div>
<div class="t" style="left:202.50px;width:600px;text-align:center;top:384.25px;font-size:10px;color:#333;">2</div>
<div class="t" style="left:202.50px;width:600px;text-align:center;top:433.61px;font-size:10px;color:#333;">3</div>
<div class="t" style="left:202.50px;width:600px;text-align:center;top:482.97px;font-size:10px;color:#333;">4</div>
<div class="t" style="left:202.50px;width:600px;text-align:center;top:532.33px;font-size:10px;color:#333;">5</div>
<div class="t" style="left:202.50px;width:600px;text-align:center;top:581.69px;font-size:10px;color:#333;">6</div>
<div class="t" style="left:202.50px;width:600px;text-align:center;top:631.05px;font-size:10px;color:#333;">7</div>
<div class="t" style="left:202.50px;width:600px;text-align:center;top:680.41px;font-size:10px;color:#333;">8</div>
<div class="t" style="left:202.50px;width:600px;text-align:center;top:729.77px;font-size:10px;color:#333;">9</div>
<div class="t" style="left:202.50px;width:600px;text-align:center;top:779.13px;font-size:10px;color:#333;">10</div>
<div class="t" style="left:202.50px;width:600px;text-align:center;top:828.49px;font-size:10px;color:#333;">11</div>
<div class="a" style="left:494px;top:315px;width:18px;height:1.3px;background:#444"></div>
<div class="a" style="left:494px;top:364px;width:18px;height:1.3px;background:#444"></div>
<div class="a" style="left:494px;top:414px;width:18px;height:1.3px;background:#444"></div>
<div class="a" style="left:494px;top:463px;width:18px;height:1.3px;background:#444"></div>
<div class="a" style="left:494px;top:512px;width:18px;height:1.3px;background:#444"></div>
<div class="a" style="left:494px;top:562px;width:18px;height:1.3px;background:#444"></div>
<div class="a" style="left:494px;top:611px;width:18px;height:1.3px;background:#444"></div>
<div class="a" style="left:494px;top:661px;width:18px;height:1.3px;background:#444"></div>
<div class="a" style="left:494px;top:710px;width:18px;height:1.3px;background:#444"></div>
<div class="a" style="left:494px;top:759px;width:18px;height:1.3px;background:#444"></div>
<div class="a" style="left:494px;top:809px;width:18px;height:1.3px;background:#444"></div>
<div class="a" style="left:494px;top:858px;width:18px;height:1.3px;background:#444"></div>
<div class="a" style="left:528px;top:243px;width:1034px;height:611px;background:#fff;border:1px solid #c8c8c8;box-sizing:border-box;border-bottom:none"></div>
<div class="a" style="left:578px;top:293px;width:936px;height:20px;background:#7aa6d6;border-top:1px solid #5b8fc8;box-sizing:border-box"></div>
<div class="a" style="left:578px;top:313px;width:936px;height:344px;background:#e9eef7;border-left:1px solid #7aa6d6;border-right:1px solid #7aa6d6;box-sizing:border-box"></div>
<div class="t" style="left:580.00px;top:295.69px;font-size:15px;color:#111;">DataBand1; Duomenų šaltinis: invoice</div>
<div class="a" style="left:578px;top:676px;width:936px;height:21px;background:#bed0e8"></div>
<div class="a" style="left:578px;top:697px;width:936px;height:10px;background:#ecf1f9;border-bottom:1px dashed #9db8dc;box-sizing:border-box"></div>
<div class="t" style="left:580.00px;top:679.79px;font-size:15px;color:#111;">HeaderBand2</div>
<div class="a" style="left:578px;top:725px;width:936px;height:20px;background:#7aa6d6"></div>
<div class="a" style="left:578px;top:745px;width:936px;height:20px;background:#e9eff9;border-bottom:1px dashed #7aa6d6;box-sizing:border-box"></div>
<div class="t" style="left:580.00px;top:729.00px;font-size:15px;color:#111;">DataBand3; Duomenų šaltinis: Nepriskitas; Pagrindinė komponentė: DataBand1</div>
<div class="a" style="left:578px;top:784px;width:936px;height:21px;background:#bed0e8"></div>
<div class="a" style="left:578px;top:805px;width:936px;height:29px;background:#ecf1f9;border-bottom:1px dashed #9db8dc;box-sizing:border-box"></div>
<div class="t" style="left:580.00px;top:786.50px;font-size:15px;color:#111;">FooterBand2</div>
<div class="a" style="left:578px;top:293px;width:936px;height:561px;background-image:linear-gradient(to right,rgba(90,95,105,0.36) 1px,transparent 1px);background-size:9.838px 9.838px;background-position:1.5px 0;-webkit-mask-image:repeating-linear-gradient(to bottom,#000 0,#000 2px,transparent 2px,transparent 3.3px);mask-image:repeating-linear-gradient(to bottom,#000 0,#000 2px,transparent 2px,transparent 3.3px)"></div>
<div class="a" style="left:578px;top:293px;width:936px;height:561px;background-image:linear-gradient(to bottom,rgba(90,95,105,0.36) 1px,transparent 1px);background-size:9.838px 9.838px;-webkit-mask-image:repeating-linear-gradient(to right,#000 0,#000 2px,transparent 2px,transparent 3.3px);mask-image:repeating-linear-gradient(to right,#000 0,#000 2px,transparent 2px,transparent 3.3px)"></div>
<div class="a" style="left:578px;top:657px;width:1.5px;height:197px;background:#6d6d6d"></div>
<div class="a" style="left:1513px;top:657px;width:1.5px;height:197px;background:#6d6d6d"></div>
<div class="a" style="left:588px;top:323px;width:739px;height:38px;background:rgba(255,255,255,0.38)"></div>
<div class="a" style="left:588px;top:361px;width:739px;height:41px;background:rgba(255,255,255,0.38)"></div>
<div class="a" style="left:588px;top:402px;width:90px;height:19px;background:rgba(255,255,255,0.38)"></div>
<div class="a" style="left:687px;top:402px;width:148px;height:19px;background:rgba(255,255,255,0.38)"></div>
<div class="a" style="left:588px;top:441px;width:277px;height:28.5px;background:rgba(255,255,255,0.38)"></div>
<div class="a" style="left:1050px;top:441px;width:277px;height:28.5px;background:rgba(255,255,255,0.38)"></div>
<div class="a" style="left:588px;top:489.6px;width:108.5px;height:99.4px;background:rgba(255,255,255,0.38)"></div>
<div class="a" style="left:696.5px;top:489.6px;width:344.5px;height:99.4px;background:rgba(255,255,255,0.38)"></div>
<div class="a" style="left:1051px;top:489.6px;width:108px;height:79.4px;background:rgba(255,255,255,0.38)"></div>
<div class="a" style="left:1159px;top:489.6px;width:344px;height:79.4px;background:rgba(255,255,255,0.38)"></div>
<div class="a" style="left:932px;top:589px;width:256.5px;height:19px;background:rgba(255,255,255,0.38)"></div>
<div class="a" style="left:588px;top:618px;width:904.5px;height:38px;background:rgba(255,255,255,0.38)"></div>
<div class="a" style="left:588px;top:745.5px;width:905px;height:20px;background:rgba(255,255,255,0.3)"></div>
<div class="a" style="left:1307px;top:805px;width:186.5px;height:29px;background:rgba(255,255,255,0.35)"></div>
<svg class="a" style="left:588px;top:323px" width="1" height="1"><g fill="none" stroke="#111" stroke-width="1.8"><path d="M0.8 5.5 V0.8 H5.5" /></g></svg>
<svg class="a" style="left:588px;top:361.3px" width="1" height="1"><g fill="none" stroke="#111" stroke-width="1.8"><path d="M0.8 -5.5 V5.5 M0.8 0 H5.5" /></g></svg>
<svg class="a" style="left:588px;top:402px" width="1" height="1"><g fill="none" stroke="#111" stroke-width="1.8"><path d="M0.8 -5.5 V5.5 M0.8 0 H5.5" /></g></svg>
<svg class="a" style="left:588px;top:421px" width="1" height="1"><g fill="none" stroke="#111" stroke-width="1.8"><path d="M0.8 -5.5 V-0.8 H5.5" /></g></svg>
<svg class="a" style="left:1327px;top:323px" width="1" height="1"><g fill="none" stroke="#111" stroke-width="1.8"><path d="M-5.5 0.8 H-0.8 V5.5" /></g></svg>
<svg class="a" style="left:1327px;top:361.3px" width="1" height="1"><g fill="none" stroke="#111" stroke-width="1.8"><path d="M-0.8 -5.5 V5.5 M-0.8 0 H-5.5" /></g></svg>
<svg class="a" style="left:1327px;top:402px" width="1" height="1"><g fill="none" stroke="#111" stroke-width="1.8"><path d="M-5.5 -0.8 H-0.8 V-5.5" /></g></svg>
<div class="t" style="left:592.00px;top:329.49px;font-size:25.4px;transform:scaleY(1.06);transform-origin:0 21.51px;font-weight:bold;color:#000;">{invoice.title}</div>
<div class="t" style="left:592.00px;top:367.57px;font-size:25.3px;transform:scaleY(1.06);transform-origin:0 21.43px;font-weight:bold;color:#000;">{invoice.documentNoString}</div>
<svg class="a" style="left:678px;top:402px" width="1" height="1"><g fill="none" stroke="#111" stroke-width="1.8"><path d="M-5.5 0.8 H-0.8 V5.5" /></g></svg>
<svg class="a" style="left:678px;top:421px" width="1" height="1"><g fill="none" stroke="#111" stroke-width="1.8"><path d="M-5.5 -0.8 H-0.8 V-5.5" /></g></svg>
<div class="t" style="left:591.50px;top:406.41px;font-size:12.5px;transform:scaleY(1.1);transform-origin:0 10.59px;font-weight:bold;color:#000;">Dok.data:</div>
<svg class="a" style="left:687px;top:402px" width="1" height="1"><g fill="none" stroke="#111" stroke-width="1.8"><path d="M0.8 5.5 V0.8 H5.5" /></g></svg>
<svg class="a" style="left:835px;top:402px" width="1" height="1"><g fill="none" stroke="#111" stroke-width="1.8"><path d="M-5.5 0.8 H-0.8 V5.5" /></g></svg>
<svg class="a" style="left:687px;top:421px" width="1" height="1"><g fill="none" stroke="#111" stroke-width="1.8"><path d="M0.8 -5.5 V-0.8 H5.5" /></g></svg>
<svg class="a" style="left:835px;top:421px" width="1" height="1"><g fill="none" stroke="#111" stroke-width="1.8"><path d="M-5.5 -0.8 H-0.8 V-5.5" /></g></svg>
<div class="t" style="left:690.00px;top:404.77px;font-size:13.5px;color:#000;">{invoice.docDate}</div>
<svg class="a" style="left:588px;top:441px" width="1" height="1"><g fill="none" stroke="#111" stroke-width="1.8"><path d="M0.8 5.5 V0.8 H5.5" /></g></svg>
<svg class="a" style="left:865px;top:441px" width="1" height="1"><g fill="none" stroke="#111" stroke-width="1.8"><path d="M-5.5 0.8 H-0.8 V5.5" /></g></svg>
<svg class="a" style="left:588px;top:469.5px" width="1" height="1"><g fill="none" stroke="#111" stroke-width="1.8"><path d="M0.8 -5.5 V-0.8 H5.5" /></g></svg>
<svg class="a" style="left:865px;top:469.5px" width="1" height="1"><g fill="none" stroke="#111" stroke-width="1.8"><path d="M-5.5 -0.8 H-0.8 V-5.5" /></g></svg>
<div class="t" style="left:591.50px;top:445.86px;font-size:16.7px;transform:scaleY(1.06);transform-origin:0 14.14px;font-weight:bold;color:#000;">{invoice.companyDescription}</div>
<svg class="a" style="left:1050px;top:441px" width="1" height="1"><g fill="none" stroke="#111" stroke-width="1.8"><path d="M0.8 5.5 V0.8 H5.5" /></g></svg>
<svg class="a" style="left:1327px;top:441px" width="1" height="1"><g fill="none" stroke="#111" stroke-width="1.8"><path d="M-5.5 0.8 H-0.8 V5.5" /></g></svg>
<svg class="a" style="left:1050px;top:469.5px" width="1" height="1"><g fill="none" stroke="#111" stroke-width="1.8"><path d="M0.8 -5.5 V-0.8 H5.5" /></g></svg>
<svg class="a" style="left:1327px;top:469.5px" width="1" height="1"><g fill="none" stroke="#111" stroke-width="1.8"><path d="M-5.5 -0.8 H-0.8 V-5.5" /></g></svg>
<div class="t" style="left:1053.50px;top:445.86px;font-size:16.7px;transform:scaleY(1.06);transform-origin:0 14.14px;font-weight:bold;color:#000;">{invoice.clientDescription}</div>
<div class="a" style="left:1375px;top:323px;width:129px;height:32px;background:#fff"></div>
<div class="a" style="left:1375px;top:355px;width:129px;height:85px;background:rgba(160,195,180,0.6)"></div>
<div class="a" style="left:1388px;top:324px;width:26px;height:2px;background:#1faa5c"></div>
<div class="a" style="left:1388px;top:329px;width:26px;height:2px;background:#1faa5c"></div>
<div class="a" style="left:1388px;top:335px;width:26px;height:2px;background:#1faa5c"></div>
<div class="a" style="left:1375px;top:340px;width:39px;height:2px;background:#1faa5c"></div>
<div class="a" style="left:1375px;top:345px;width:13px;height:2px;background:#1faa5c"></div>
<div class="a" style="left:1375px;top:350px;width:13px;height:2px;background:#1faa5c"></div>
<div class="t" style="left:1424.50px;top:320.33px;font-size:18.5px;font-weight:bold;color:#111;letter-spacing:4.2px;">RIVILE</div>
<div class="t" style="left:1425.00px;top:343.31px;font-size:11.2px;font-weight:bold;color:#2aa860;">ERP</div>
<svg class="a" style="left:1375px;top:323px" width="1" height="1"><g fill="none" stroke="#111" stroke-width="1.8"><path d="M0.8 5.5 V0.8 H5.5" /></g></svg>
<svg class="a" style="left:1504px;top:323px" width="1" height="1"><g fill="none" stroke="#111" stroke-width="1.8"><path d="M-5.5 0.8 H-0.8 V5.5" /></g></svg>
<svg class="a" style="left:1375px;top:440px" width="1" height="1"><g fill="none" stroke="#111" stroke-width="1.8"><path d="M0.8 -5.5 V-0.8 H5.5" /></g></svg>
<svg class="a" style="left:1504px;top:440px" width="1" height="1"><g fill="none" stroke="#111" stroke-width="1.8"><path d="M-5.5 -0.8 H-0.8 V-5.5" /></g></svg>
<svg class="a" style="left:588px;top:489.6px" width="1" height="1"><g fill="none" stroke="#111" stroke-width="1.8"><path d="M0.8 5.5 V0.8 H5.5" /></g></svg>
<svg class="a" style="left:696.5px;top:489.6px" width="1" height="1"><g fill="none" stroke="#111" stroke-width="1.8"><path d="M-5.5 0.8 H5.5 M0 0.8 V6.5" /></g></svg>
<svg class="a" style="left:588px;top:509.5px" width="1" height="1"><g fill="none" stroke="#111" stroke-width="1.8"><path d="M0.8 -5.5 V5.5 M0.8 0 H5.5" /></g></svg>
<svg class="a" style="left:696.5px;top:509.5px" width="1" height="1"><g fill="none" stroke="#111" stroke-width="1.8"><path d="M-5.5 0 H5.5 M0 -5.5 V5.5" /></g></svg>
<svg class="a" style="left:588px;top:529.2px" width="1" height="1"><g fill="none" stroke="#111" stroke-width="1.8"><path d="M0.8 -5.5 V5.5 M0.8 0 H5.5" /></g></svg>
<svg class="a" style="left:696.5px;top:529.2px" width="1" height="1"><g fill="none" stroke="#111" stroke-width="1.8"><path d="M-5.5 0 H5.5 M0 -5.5 V5.5" /></g></svg>
<svg class="a" style="left:588px;top:549.2px" width="1" height="1"><g fill="none" stroke="#111" stroke-width="1.8"><path d="M0.8 -5.5 V5.5 M0.8 0 H5.5" /></g></svg>
<svg class="a" style="left:696.5px;top:549.2px" width="1" height="1"><g fill="none" stroke="#111" stroke-width="1.8"><path d="M-5.5 0 H5.5 M0 -5.5 V5.5" /></g></svg>
<svg class="a" style="left:588px;top:568.8px" width="1" height="1"><g fill="none" stroke="#111" stroke-width="1.8"><path d="M0.8 -5.5 V5.5 M0.8 0 H5.5" /></g></svg>
<svg class="a" style="left:696.5px;top:568.8px" width="1" height="1"><g fill="none" stroke="#111" stroke-width="1.8"><path d="M-5.5 0 H5.5 M0 -5.5 V5.5" /></g></svg>
<svg class="a" style="left:588px;top:588.9px" width="1" height="1"><g fill="none" stroke="#111" stroke-width="1.8"><path d="M0.8 -5.5 V-0.8 H5.5" /></g></svg>
<svg class="a" style="left:696.5px;top:588.9px" width="1" height="1"><g fill="none" stroke="#111" stroke-width="1.8"><path d="M-5.5 -0.8 H5.5 M0 -0.8 V-6.5" /></g></svg>
<div class="t" style="left:591.50px;top:492.70px;font-size:12.4px;transform:scaleY(1.1);transform-origin:0 10.50px;font-weight:bold;color:#000;">Pavadinimas:</div>
<div class="t" style="left:700.00px;top:491.60px;font-size:13.7px;color:#000;">{company_client.name}</div>
<div class="t" style="left:591.50px;top:512.60px;font-size:12.4px;transform:scaleY(1.1);transform-origin:0 10.50px;font-weight:bold;color:#000;">Adresas:</div>
<div class="t" style="left:700.00px;top:511.50px;font-size:13.7px;color:#000;">{company_client.address}</div>
<div class="t" style="left:591.50px;top:532.30px;font-size:12.4px;transform:scaleY(1.1);transform-origin:0 10.50px;font-weight:bold;color:#000;">Įmonės kodas:</div>
<div class="t" style="left:700.00px;top:531.20px;font-size:13.7px;color:#000;">{company_client.regCode}</div>
<div class="t" style="left:591.50px;top:552.30px;font-size:12.4px;transform:scaleY(1.1);transform-origin:0 10.50px;font-weight:bold;color:#000;">PVM kodas:</div>
<div class="t" style="left:700.00px;top:551.20px;font-size:13.7px;color:#000;">{company_client.vatNumber}</div>
<div class="t" style="left:591.50px;top:571.90px;font-size:12.4px;transform:scaleY(1.1);transform-origin:0 10.50px;font-weight:bold;color:#000;">A/s Nr.</div>
<div class="t" style="left:700.00px;top:570.80px;font-size:13.7px;color:#000;">{company_client.mainBankAccount}</div>
<svg class="a" style="left:1051px;top:489.6px" width="1" height="1"><g fill="none" stroke="#111" stroke-width="1.8"><path d="M0.8 5.5 V0.8 H5.5" /></g></svg>
<svg class="a" style="left:1159px;top:489.6px" width="1" height="1"><g fill="none" stroke="#111" stroke-width="1.8"><path d="M-5.5 0.8 H5.5 M0 0.8 V6.5" /></g></svg>
<svg class="a" style="left:1503px;top:489.6px" width="1" height="1"><g fill="none" stroke="#111" stroke-width="1.8"><path d="M-5.5 0.8 H-0.8 V5.5" /></g></svg>
<svg class="a" style="left:1051px;top:509.4px" width="1" height="1"><g fill="none" stroke="#111" stroke-width="1.8"><path d="M0.8 -5.5 V5.5 M0.8 0 H5.5" /></g></svg>
<svg class="a" style="left:1159px;top:509.4px" width="1" height="1"><g fill="none" stroke="#111" stroke-width="1.8"><path d="M-5.5 0 H5.5 M0 -5.5 V5.5" /></g></svg>
<svg class="a" style="left:1503px;top:509.4px" width="1" height="1"><g fill="none" stroke="#111" stroke-width="1.8"><path d="M-0.8 -5.5 V5.5 M-0.8 0 H-5.5" /></g></svg>
<svg class="a" style="left:1051px;top:529.2px" width="1" height="1"><g fill="none" stroke="#111" stroke-width="1.8"><path d="M0.8 -5.5 V5.5 M0.8 0 H5.5" /></g></svg>
<svg class="a" style="left:1159px;top:529.2px" width="1" height="1"><g fill="none" stroke="#111" stroke-width="1.8"><path d="M-5.5 0 H5.5 M0 -5.5 V5.5" /></g></svg>
<svg class="a" style="left:1503px;top:529.2px" width="1" height="1"><g fill="none" stroke="#111" stroke-width="1.8"><path d="M-0.8 -5.5 V5.5 M-0.8 0 H-5.5" /></g></svg>
<svg class="a" style="left:1051px;top:549.1px" width="1" height="1"><g fill="none" stroke="#111" stroke-width="1.8"><path d="M0.8 -5.5 V5.5 M0.8 0 H5.5" /></g></svg>
<svg class="a" style="left:1159px;top:549.1px" width="1" height="1"><g fill="none" stroke="#111" stroke-width="1.8"><path d="M-5.5 0 H5.5 M0 -5.5 V5.5" /></g></svg>
<svg class="a" style="left:1503px;top:549.1px" width="1" height="1"><g fill="none" stroke="#111" stroke-width="1.8"><path d="M-0.8 -5.5 V5.5 M-0.8 0 H-5.5" /></g></svg>
<svg class="a" style="left:1051px;top:569px" width="1" height="1"><g fill="none" stroke="#111" stroke-width="1.8"><path d="M0.8 -5.5 V-0.8 H5.5" /></g></svg>
<svg class="a" style="left:1159px;top:569px" width="1" height="1"><g fill="none" stroke="#111" stroke-width="1.8"><path d="M-5.5 -0.8 H5.5 M0 -0.8 V-6.5" /></g></svg>
<svg class="a" style="left:1503px;top:569px" width="1" height="1"><g fill="none" stroke="#111" stroke-width="1.8"><path d="M-5.5 -0.8 H-0.8 V-5.5" /></g></svg>
<div class="t" style="left:1054.00px;top:492.70px;font-size:12.4px;transform:scaleY(1.1);transform-origin:0 10.50px;font-weight:bold;color:#000;">Pavadinimas:</div>
<div class="t" style="left:1162.50px;top:491.60px;font-size:13.7px;color:#000;">{invoice.clientName}</div>
<div class="t" style="left:1054.00px;top:512.50px;font-size:12.4px;transform:scaleY(1.1);transform-origin:0 10.50px;font-weight:bold;color:#000;">Adresas:</div>
<div class="t" style="left:1162.50px;top:511.40px;font-size:13.7px;color:#000;">{invoice_client.address}</div>
<div class="t" style="left:1054.00px;top:532.30px;font-size:12.4px;transform:scaleY(1.1);transform-origin:0 10.50px;font-weight:bold;color:#000;">Įmonės kodas:</div>
<div class="t" style="left:1162.50px;top:531.20px;font-size:13.7px;color:#000;">{invoice_client.regCode}</div>
<div class="t" style="left:1054.00px;top:552.20px;font-size:12.4px;transform:scaleY(1.1);transform-origin:0 10.50px;font-weight:bold;color:#000;">PVM kodas:</div>
<div class="t" style="left:1162.50px;top:551.10px;font-size:13.7px;color:#000;">{invoice_client.vatNumber}</div>
<svg class="a" style="left:1041px;top:489.6px" width="1" height="1"><g fill="none" stroke="#111" stroke-width="1.8"><path d="M-5.5 0.8 H-0.8 V5.5" /></g></svg>
<svg class="a" style="left:1041px;top:509.4px" width="1" height="1"><g fill="none" stroke="#111" stroke-width="1.8"><path d="M-0.8 -5.5 V5.5 M-0.8 0 H-5.5" /></g></svg>
<svg class="a" style="left:1041px;top:529.2px" width="1" height="1"><g fill="none" stroke="#111" stroke-width="1.8"><path d="M-0.8 -5.5 V5.5 M-0.8 0 H-5.5" /></g></svg>
<svg class="a" style="left:1041px;top:549.1px" width="1" height="1"><g fill="none" stroke="#111" stroke-width="1.8"><path d="M-0.8 -5.5 V5.5 M-0.8 0 H-5.5" /></g></svg>
<svg class="a" style="left:1041px;top:569px" width="1" height="1"><g fill="none" stroke="#111" stroke-width="1.8"><path d="M-0.8 -5.5 V5.5 M-0.8 0 H-5.5" /></g></svg>
<svg class="a" style="left:1041px;top:589px" width="1" height="1"><g fill="none" stroke="#111" stroke-width="1.8"><path d="M-5.5 -0.8 H-0.8 V-5.5" /></g></svg>
<svg class="a" style="left:932px;top:589px" width="1" height="1"><g fill="none" stroke="#111" stroke-width="1.8"><path d="M0.8 5.5 V0.8 H5.5" /></g></svg>
<svg class="a" style="left:1188.5px;top:589px" width="1" height="1"><g fill="none" stroke="#111" stroke-width="1.8"><path d="M-5.5 0.8 H-0.8 V5.5" /></g></svg>
<svg class="a" style="left:932px;top:608px" width="1" height="1"><g fill="none" stroke="#111" stroke-width="1.8"><path d="M0.8 -5.5 V-0.8 H5.5" /></g></svg>
<svg class="a" style="left:1188.5px;top:608px" width="1" height="1"><g fill="none" stroke="#111" stroke-width="1.8"><path d="M-5.5 -0.8 H-0.8 V-5.5" /></g></svg>
<div class="t" style="left:1034.00px;top:592.78px;font-size:12.3px;transform:scaleY(1.1);transform-origin:0 10.42px;font-weight:bold;color:#000;">(tęsinys)</div>
<svg class="a" style="left:588px;top:618px" width="1" height="1"><g fill="none" stroke="#111" stroke-width="1.8"><path d="M0.8 5.5 V0.8 H5.5" /></g></svg>
<svg class="a" style="left:588px;top:656px" width="1" height="1"><g fill="none" stroke="#111" stroke-width="1.8"><path d="M0.8 -5.5 V-0.8 H5.5" /></g></svg>
<svg class="a" style="left:686.5px;top:618px" width="1" height="1"><g fill="none" stroke="#111" stroke-width="1.8"><path d="M-5.5 0.8 H5.5 M0 0.8 V6.5" /></g></svg>
<svg class="a" style="left:686.5px;top:656px" width="1" height="1"><g fill="none" stroke="#111" stroke-width="1.8"><path d="M-5.5 -0.8 H5.5 M0 -0.8 V-6.5" /></g></svg>
<svg class="a" style="left:932px;top:618px" width="1" height="1"><g fill="none" stroke="#111" stroke-width="1.8"><path d="M-5.5 0.8 H5.5 M0 0.8 V6.5" /></g></svg>
<svg class="a" style="left:932px;top:656px" width="1" height="1"><g fill="none" stroke="#111" stroke-width="1.8"><path d="M-5.5 -0.8 H5.5 M0 -0.8 V-6.5" /></g></svg>
<svg class="a" style="left:981.6px;top:618px" width="1" height="1"><g fill="none" stroke="#111" stroke-width="1.8"><path d="M-5.5 0.8 H5.5 M0 0.8 V6.5" /></g></svg>
<svg class="a" style="left:981.6px;top:656px" width="1" height="1"><g fill="none" stroke="#111" stroke-width="1.8"><path d="M-5.5 -0.8 H5.5 M0 -0.8 V-6.5" /></g></svg>
<svg class="a" style="left:1060.6px;top:618px" width="1" height="1"><g fill="none" stroke="#111" stroke-width="1.8"><path d="M-5.5 0.8 H5.5 M0 0.8 V6.5" /></g></svg>
<svg class="a" style="left:1060.6px;top:656px" width="1" height="1"><g fill="none" stroke="#111" stroke-width="1.8"><path d="M-5.5 -0.8 H5.5 M0 -0.8 V-6.5" /></g></svg>
<svg class="a" style="left:1149.7px;top:618px" width="1" height="1"><g fill="none" stroke="#111" stroke-width="1.8"><path d="M-5.5 0.8 H5.5 M0 0.8 V6.5" /></g></svg>
<svg class="a" style="left:1149.7px;top:656px" width="1" height="1"><g fill="none" stroke="#111" stroke-width="1.8"><path d="M-5.5 -0.8 H5.5 M0 -0.8 V-6.5" /></g></svg>
<svg class="a" style="left:1198.4px;top:618px" width="1" height="1"><g fill="none" stroke="#111" stroke-width="1.8"><path d="M-5.5 0.8 H5.5 M0 0.8 V6.5" /></g></svg>
<svg class="a" style="left:1198.4px;top:656px" width="1" height="1"><g fill="none" stroke="#111" stroke-width="1.8"><path d="M-5.5 -0.8 H5.5 M0 -0.8 V-6.5" /></g></svg>
<svg class="a" style="left:1286.8px;top:618px" width="1" height="1"><g fill="none" stroke="#111" stroke-width="1.8"><path d="M-5.5 0.8 H5.5 M0 0.8 V6.5" /></g></svg>
<svg class="a" style="left:1286.8px;top:656px" width="1" height="1"><g fill="none" stroke="#111" stroke-width="1.8"><path d="M-5.5 -0.8 H5.5 M0 -0.8 V-6.5" /></g></svg>
<svg class="a" style="left:1326.1px;top:618px" width="1" height="1"><g fill="none" stroke="#111" stroke-width="1.8"><path d="M-5.5 0.8 H5.5 M0 0.8 V6.5" /></g></svg>
<svg class="a" style="left:1326.1px;top:656px" width="1" height="1"><g fill="none" stroke="#111" stroke-width="1.8"><path d="M-5.5 -0.8 H5.5 M0 -0.8 V-6.5" /></g></svg>
<svg class="a" style="left:1405.1px;top:618px" width="1" height="1"><g fill="none" stroke="#111" stroke-width="1.8"><path d="M-5.5 0.8 H5.5 M0 0.8 V6.5" /></g></svg>
<svg class="a" style="left:1405.1px;top:656px" width="1" height="1"><g fill="none" stroke="#111" stroke-width="1.8"><path d="M-5.5 -0.8 H5.5 M0 -0.8 V-6.5" /></g></svg>
<svg class="a" style="left:1492.5px;top:618px" width="1" height="1"><g fill="none" stroke="#111" stroke-width="1.8"><path d="M-5.5 0.8 H-0.8 V5.5" /></g></svg>
<svg class="a" style="left:1492.5px;top:656px" width="1" height="1"><g fill="none" stroke="#111" stroke-width="1.8"><path d="M-5.5 -0.8 H-0.8 V-5.5" /></g></svg>
<div class="a" style="left:587px;top:654.5px;width:916px;height:3px;background:#1fa347"></div>
<div class="t" style="left:595.00px;top:622.68px;font-size:12.3px;transform:scaleY(1.1);transform-origin:0 10.42px;font-weight:bold;color:#000;">Kodas</div>
<div class="t" style="left:694.00px;top:622.68px;font-size:12.3px;transform:scaleY(1.1);transform-origin:0 10.42px;font-weight:bold;color:#000;">Pavadinimas</div>
<div class="t" style="right:603.50px;top:622.68px;font-size:12.3px;transform:scaleY(1.1);transform-origin:0 10.42px;font-weight:bold;color:#000;">Mato</div>
<div class="t" style="right:603.50px;top:640.48px;font-size:12.3px;transform:scaleY(1.1);transform-origin:0 10.42px;font-weight:bold;color:#000;">vnt.</div>
<div class="t" style="left:1017.00px;top:622.68px;font-size:12.3px;transform:scaleY(1.1);transform-origin:0 10.42px;font-weight:bold;color:#000;">Kiekis</div>
<div class="t" style="right:436.00px;top:622.68px;font-size:12.3px;transform:scaleY(1.1);transform-origin:0 10.42px;font-weight:bold;color:#000;">Kaina</div>
<div class="t" style="right:436.00px;top:640.48px;font-size:12.3px;transform:scaleY(1.1);transform-origin:0 10.42px;font-weight:bold;color:#000;">{varCurrenc</div>
<div class="t" style="left:1157.50px;top:622.68px;font-size:12.3px;transform:scaleY(1.1);transform-origin:0 10.42px;font-weight:bold;color:#000;">Nuol.</div>
<div class="t" style="right:386.00px;top:640.48px;font-size:12.3px;transform:scaleY(1.1);transform-origin:0 10.42px;font-weight:bold;color:#000;">%</div>
<div class="t" style="right:298.00px;top:622.68px;font-size:12.3px;transform:scaleY(1.1);transform-origin:0 10.42px;font-weight:bold;color:#000;">Kaina</div>
<div class="t" style="right:298.00px;top:640.48px;font-size:12.3px;transform:scaleY(1.1);transform-origin:0 10.42px;font-weight:bold;color:#000;">{varCurrenc</div>
<div class="t" style="left:1288.50px;top:622.68px;font-size:12.3px;transform:scaleY(1.1);transform-origin:0 10.42px;font-weight:bold;color:#000;">PVM</div>
<div class="t" style="right:258.50px;top:640.48px;font-size:12.3px;transform:scaleY(1.1);transform-origin:0 10.42px;font-weight:bold;color:#000;">%</div>
<div class="t" style="right:181.00px;top:622.68px;font-size:12.3px;transform:scaleY(1.1);transform-origin:0 10.42px;font-weight:bold;color:#000;">PVM</div>
<div class="t" style="right:181.00px;top:640.48px;font-size:12.3px;transform:scaleY(1.1);transform-origin:0 10.42px;font-weight:bold;color:#000;">suma,</div>
<div class="t" style="right:92.00px;top:622.68px;font-size:12.3px;transform:scaleY(1.1);transform-origin:0 10.42px;font-weight:bold;color:#000;">Suma be</div>
<div class="t" style="right:92.00px;top:640.48px;font-size:12.3px;transform:scaleY(1.1);transform-origin:0 10.42px;font-weight:bold;color:#000;">PVM,</div>
<svg class="a" style="left:588px;top:745.5px" width="1" height="1"><g fill="none" stroke="#111" stroke-width="1.8"><path d="M0.8 5.5 V0.8 H5.5" /></g></svg>
<svg class="a" style="left:588px;top:765.5px" width="1" height="1"><g fill="none" stroke="#111" stroke-width="1.8"><path d="M0.8 -5.5 V-0.8 H5.5" /></g></svg>
<svg class="a" style="left:686.5px;top:745.5px" width="1" height="1"><g fill="none" stroke="#111" stroke-width="1.8"><path d="M-5.5 0.8 H5.5 M0 0.8 V6.5" /></g></svg>
<svg class="a" style="left:686.5px;top:765.5px" width="1" height="1"><g fill="none" stroke="#111" stroke-width="1.8"><path d="M-5.5 -0.8 H5.5 M0 -0.8 V-6.5" /></g></svg>
<svg class="a" style="left:932px;top:745.5px" width="1" height="1"><g fill="none" stroke="#111" stroke-width="1.8"><path d="M-5.5 0.8 H5.5 M0 0.8 V6.5" /></g></svg>
<svg class="a" style="left:932px;top:765.5px" width="1" height="1"><g fill="none" stroke="#111" stroke-width="1.8"><path d="M-5.5 -0.8 H5.5 M0 -0.8 V-6.5" /></g></svg>
<svg class="a" style="left:981.8px;top:745.5px" width="1" height="1"><g fill="none" stroke="#111" stroke-width="1.8"><path d="M-5.5 0.8 H5.5 M0 0.8 V6.5" /></g></svg>
<svg class="a" style="left:981.8px;top:765.5px" width="1" height="1"><g fill="none" stroke="#111" stroke-width="1.8"><path d="M-5.5 -0.8 H5.5 M0 -0.8 V-6.5" /></g></svg>
<svg class="a" style="left:1060.8px;top:745.5px" width="1" height="1"><g fill="none" stroke="#111" stroke-width="1.8"><path d="M-5.5 0.8 H5.5 M0 0.8 V6.5" /></g></svg>
<svg class="a" style="left:1060.8px;top:765.5px" width="1" height="1"><g fill="none" stroke="#111" stroke-width="1.8"><path d="M-5.5 -0.8 H5.5 M0 -0.8 V-6.5" /></g></svg>
<svg class="a" style="left:1149.8px;top:745.5px" width="1" height="1"><g fill="none" stroke="#111" stroke-width="1.8"><path d="M-5.5 0.8 H5.5 M0 0.8 V6.5" /></g></svg>
<svg class="a" style="left:1149.8px;top:765.5px" width="1" height="1"><g fill="none" stroke="#111" stroke-width="1.8"><path d="M-5.5 -0.8 H5.5 M0 -0.8 V-6.5" /></g></svg>
<svg class="a" style="left:1198.1px;top:745.5px" width="1" height="1"><g fill="none" stroke="#111" stroke-width="1.8"><path d="M-5.5 0.8 H5.5 M0 0.8 V6.5" /></g></svg>
<svg class="a" style="left:1198.1px;top:765.5px" width="1" height="1"><g fill="none" stroke="#111" stroke-width="1.8"><path d="M-5.5 -0.8 H5.5 M0 -0.8 V-6.5" /></g></svg>
<svg class="a" style="left:1287px;top:745.5px" width="1" height="1"><g fill="none" stroke="#111" stroke-width="1.8"><path d="M-5.5 0.8 H5.5 M0 0.8 V6.5" /></g></svg>
<svg class="a" style="left:1287px;top:765.5px" width="1" height="1"><g fill="none" stroke="#111" stroke-width="1.8"><path d="M-5.5 -0.8 H5.5 M0 -0.8 V-6.5" /></g></svg>
<svg class="a" style="left:1325.5px;top:745.5px" width="1" height="1"><g fill="none" stroke="#111" stroke-width="1.8"><path d="M-5.5 0.8 H5.5 M0 0.8 V6.5" /></g></svg>
<svg class="a" style="left:1325.5px;top:765.5px" width="1" height="1"><g fill="none" stroke="#111" stroke-width="1.8"><path d="M-5.5 -0.8 H5.5 M0 -0.8 V-6.5" /></g></svg>
<svg class="a" style="left:1404.8px;top:745.5px" width="1" height="1"><g fill="none" stroke="#111" stroke-width="1.8"><path d="M-5.5 0.8 H5.5 M0 0.8 V6.5" /></g></svg>
<svg class="a" style="left:1404.8px;top:765.5px" width="1" height="1"><g fill="none" stroke="#111" stroke-width="1.8"><path d="M-5.5 -0.8 H5.5 M0 -0.8 V-6.5" /></g></svg>
<svg class="a" style="left:1493px;top:745.5px" width="1" height="1"><g fill="none" stroke="#111" stroke-width="1.8"><path d="M-5.5 0.8 H-0.8 V5.5" /></g></svg>
<svg class="a" style="left:1493px;top:765.5px" width="1" height="1"><g fill="none" stroke="#111" stroke-width="1.8"><path d="M-5.5 -0.8 H-0.8 V-5.5" /></g></svg>
<div class="a" style="left:595px;width:83px;top:746.57px;height:19.5px;font-size:13.5px;line-height:1;overflow:hidden;display:flex;justify-content:flex-start;color:#000;white-space:nowrap"><span style="flex-shrink:0;padding-top:3px">{invoice_lines.itemCode}</span></div>
<div class="a" style="left:694px;width:232px;top:746.57px;height:19.5px;font-size:13.5px;line-height:1;overflow:hidden;display:flex;justify-content:flex-start;color:#000;white-space:nowrap"><span style="flex-shrink:0;padding-top:3px">{invoice_lines.itemName}</span></div>
<div class="a" style="left:939px;width:34px;top:746.57px;height:19.5px;font-size:13.5px;line-height:1;overflow:hidden;display:flex;justify-content:flex-start;color:#000;white-space:nowrap"><span style="flex-shrink:0;padding-top:3px">{invoice_lines.unit}</span></div>
<div class="a" style="left:990px;width:62px;top:746.57px;height:19.5px;font-size:13.5px;line-height:1;overflow:hidden;display:flex;justify-content:flex-start;color:#000;white-space:nowrap"><span style="flex-shrink:0;padding-top:3px">{invoice_lines.quantity}</span></div>
<div class="a" style="left:1061px;width:82px;top:746.57px;height:19.5px;font-size:13.5px;line-height:1;overflow:hidden;display:flex;justify-content:flex-end;color:#000;white-space:nowrap"><span style="flex-shrink:0;padding-top:3px">{invoice_lines.priceNoTaxBefore}</span></div>
<div class="a" style="left:1149px;width:42px;top:746.57px;height:19.5px;font-size:13.5px;line-height:1;overflow:hidden;display:flex;justify-content:flex-end;color:#000;white-space:nowrap"><span style="flex-shrink:0;padding-top:3px">{invoice_lines.discountPerc}</span></div>
<div class="a" style="left:1198px;width:82px;top:746.57px;height:19.5px;font-size:13.5px;line-height:1;overflow:hidden;display:flex;justify-content:flex-end;color:#000;white-space:nowrap"><span style="flex-shrink:0;padding-top:3px">{invoice_lines.priceNoTaxAfter}</span></div>
<div class="a" style="left:1287px;width:32px;top:746.57px;height:19.5px;font-size:13.5px;line-height:1;overflow:hidden;display:flex;justify-content:flex-end;color:#000;white-space:nowrap"><span style="flex-shrink:0;padding-top:3px">{invoice_lines.vatPercent}</span></div>
<div class="a" style="left:1325.5px;width:71.5px;top:746.57px;height:19.5px;font-size:13.5px;line-height:1;overflow:hidden;display:flex;justify-content:flex-end;color:#000;white-space:nowrap"><span style="flex-shrink:0;padding-top:3px">{invoice_lines.amountTaxCur}</span></div>
<div class="a" style="left:1405px;width:81px;top:746.57px;height:19.5px;font-size:13.5px;line-height:1;overflow:hidden;display:flex;justify-content:flex-end;color:#000;white-space:nowrap"><span style="flex-shrink:0;padding-top:3px">{invoice_lines.amountCur}</span></div>
<div class="a" style="left:1058px;top:743px;width:6px;height:5px;background:#777"></div>
<div class="a" style="left:1058px;top:764px;width:6px;height:5px;background:#777"></div>
<div class="a" style="left:1101px;top:743px;width:6px;height:5px;background:#777"></div>
<div class="a" style="left:1101px;top:764px;width:6px;height:5px;background:#777"></div>
<div class="a" style="left:1147px;top:743px;width:6px;height:5px;background:#777"></div>
<div class="a" style="left:1147px;top:764px;width:6px;height:5px;background:#777"></div>
<svg class="a" style="left:1307px;top:805px" width="1" height="1"><g fill="none" stroke="#111" stroke-width="1.8"><path d="M0.8 5.5 V0.8 H5.5" /></g></svg>
<svg class="a" style="left:1493.5px;top:805px" width="1" height="1"><g fill="none" stroke="#111" stroke-width="1.8"><path d="M-5.5 0.8 H-0.8 V5.5" /></g></svg>
<svg class="a" style="left:1307px;top:834px" width="1" height="1"><g fill="none" stroke="#111" stroke-width="1.8"><path d="M0.8 -5.5 V-0.8 H5.5" /></g></svg>
<svg class="a" style="left:1493.5px;top:834px" width="1" height="1"><g fill="none" stroke="#111" stroke-width="1.8"><path d="M-5.5 -0.8 H-0.8 V-5.5" /></g></svg>
<svg class="a" style="left:1404.8px;top:805px" width="1" height="1"><g fill="none" stroke="#111" stroke-width="1.8"><path d="M-5.5 0.8 H5.5 M0 0.8 V6.5" /></g></svg>
<svg class="a" style="left:1404.8px;top:834px" width="1" height="1"><g fill="none" stroke="#111" stroke-width="1.8"><path d="M-5.5 -0.8 H5.5 M0 -0.8 V-6.5" /></g></svg>
<div class="t" style="right:180.00px;top:811.77px;font-size:13.5px;color:#000;">Iš viso:</div>
<div class="a" style="left:1405px;width:81px;top:808.77px;height:19.5px;font-size:13.5px;line-height:1;overflow:hidden;display:flex;justify-content:flex-end;color:#000;white-space:nowrap"><span style="flex-shrink:0;padding-top:3px">{invoice_lines.sumAmountCur}</span></div>
<div class="a" style="left:1041px;top:716px;width:133px;height:77px;border:5px solid #fd7e23;box-sizing:border-box"></div>
</body></html>
